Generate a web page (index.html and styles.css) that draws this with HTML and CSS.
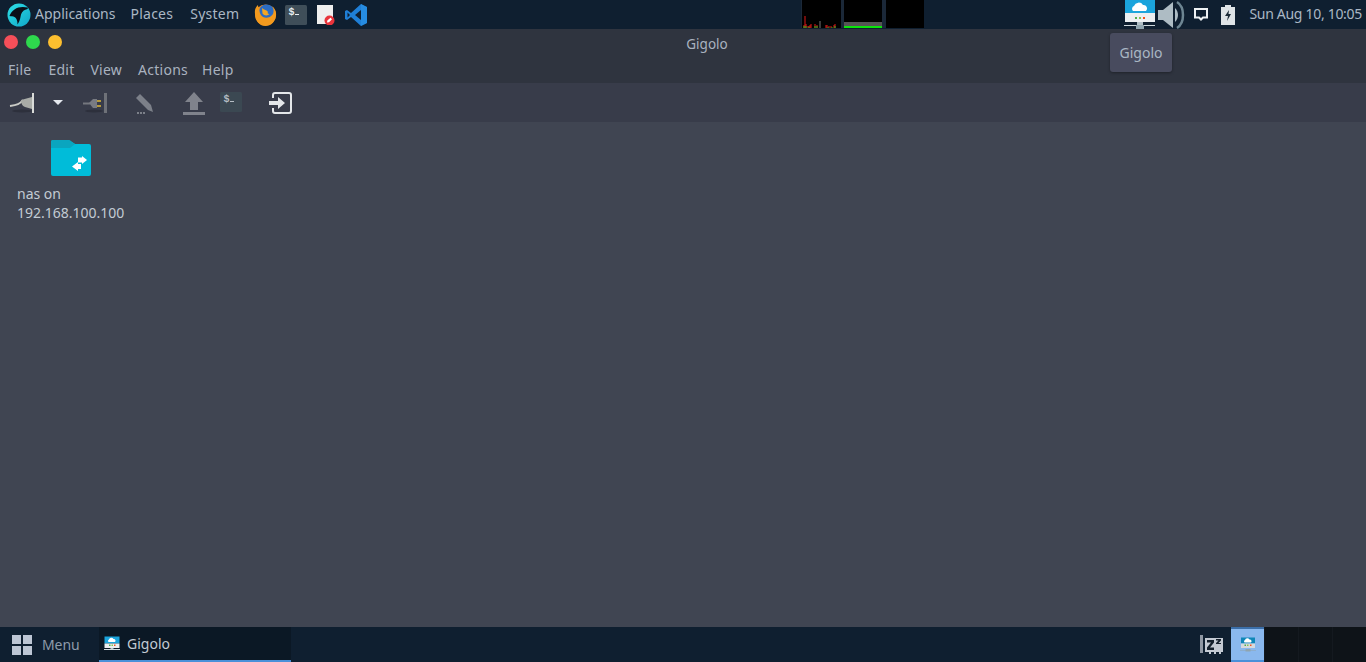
FILE: index.html
```html
<!DOCTYPE html>
<html lang="en">
<head>
<meta charset="utf-8">
<title>Gigolo</title>
<link rel="stylesheet" href="styles.css">
</head>
<body>
<header class="panel">
  <div class="panel-left">
    <svg class="logo" width="24" height="24" viewBox="0 0 24 24"><defs><linearGradient id="lg" x1="0" y1="0" x2="1" y2="1"><stop offset="0" stop-color="#2fe0e6"/><stop offset="1" stop-color="#0fa6c8"/></linearGradient></defs><circle cx="12" cy="12" r="11.500" fill="url(#lg)"/><path d="M2.500 13 C5 6 12 2.500 20.500 4.500 C21.500 5 20.500 6.500 19 6.500 C15.500 7.500 14 10 13.500 14 C13 17 12 19 10.500 21.500 C10.500 17.500 9.500 15 7.500 14 C6 13.300 4.500 13.500 2.500 13Z" fill="#0a0f18"/></svg>
    <span class="pmenu pm-app">Applications</span>
    <span class="pmenu pm-places">Places</span>
    <span class="pmenu pm-system">System</span>
    <svg class="launcher l-ff" width="24" height="24" viewBox="0 0 24 24"><circle cx="12.500" cy="12" r="10.500" fill="#f08a1d"/><circle cx="13.500" cy="9.500" r="8" fill="#2b6cc4"/><path d="M2 7 C2.500 5 3.500 3 5 2 C5 3.500 5.500 4.500 6.500 5 C6 8 7 12 10 14 C13 15.500 17 15 20 11 C21.500 7 20 4 18.500 3 C22 5 23.500 9 23 13 C22 19 18 23 12.500 23 C6 23 1 17 2 7Z" fill="#f29a1e"/><path d="M9 5 C11 7 14 7 15 9 C14 10 15 11 16.500 11 C15 13 11 13 9.500 10.500Z" fill="#f5a623"/></svg>
    <svg class="launcher l-term" width="22" height="20" viewBox="0 0 22 20"><rect width="22" height="20" rx="1.500" fill="#3f4e59"/><text x="3.500" y="10" class="term-glyph">$</text><rect x="10" y="9" width="4" height="1" fill="#e8eef2"/></svg>
    <svg class="launcher l-note" width="18" height="20" viewBox="0 0 18 20"><rect y="0" width="16" height="19" fill="#efefef"/><circle cx="12.500" cy="15.500" r="5" fill="#e8343c"/><path d="M10 17.500 L10.300 15.500 L13.500 12.800 L15 14.300 L12 17.200Z" fill="#fff"/></svg>
    <svg class="launcher l-code" width="24" height="24" viewBox="0 0 24 24"><path d="M17 1 L23 4 L23 20 L17 23 L7 14 L3 17 L1 16 L1 8 L3 7 L7 10Z M17 7 L11 12 L17 17Z M3.500 9.500 L3.500 14.500 L6 12Z" fill="#1f7fd6" fill-rule="evenodd"/><path d="M17 1 L23 4 V20 L17 23Z M17 7 V17" fill="#2b95e8" fill-rule="evenodd" opacity=".6"/></svg>
  </div>
  <div class="monitors">
    <div class="mon mon-cpu">
      <svg width="37" height="28" viewBox="0 0 37 28"><path d="M1 28V25M2 28V16M3 28V24M5 28V26M6 28V26M7 28V25M8 28V24M12 28V24M14 28V25M23 28V25M24 28V25M26 28V26M28 28V26M31 28V25M32 28V24" stroke="#e01818" stroke-width="1"/><path d="M1 28V26M3 28V26M6 28V27M12 28V26M14 28V26M25 28V27M29 28V27M32 28V26" stroke="#20c020" stroke-width="1"/><path d="M17 28V21" stroke="#777" stroke-width="1"/></svg>
    </div>
    <div class="mon mon-mem"><div class="mem-grey"></div><div class="mem-green"></div></div>
    <div class="mon mon-net"></div>
  </div>
  <div class="panel-right">
    <svg class="tray-net" width="32" height="30" viewBox="0 0 32 30"><rect x="1" y="0" width="30" height="13" fill="#1ba4dc"/><path d="M9 11 a3 3 0 0 1 1-5 a5 5 0 0 1 9-1 a3.500 3.500 0 0 1 3 6Z" fill="#fff"/><rect x="1" y="13" width="30" height="9" fill="#eceff1"/><rect x="11" y="17" width="2" height="2" fill="#4caf50"/><rect x="15" y="17" width="2" height="2" fill="#8bc34a"/><rect x="19" y="17" width="2" height="2" fill="#f4511e"/><rect x="13" y="22" width="6" height="3" fill="#b0bec5"/><rect x="0" y="25" width="31" height="1" fill="#cfd8dc"/><rect x="12" y="25" width="8" height="4" fill="#90a4ae"/></svg>
    <svg class="tray-vol" width="30" height="30" viewBox="0 0 30 30"><path d="M1 10 H6 L16 2 V28 L6 20 H1Z" fill="#aebcc4"/><path d="M18 8 C22 12 22 18 18 22Z" fill="#aebcc4"/><path d="M20 2 C28 7 28 23 20 28" fill="none" stroke="#6d8592" stroke-width="2.500"/></svg>
    <svg class="tray-msg" width="14" height="13" viewBox="0 0 14 13"><path d="M1 1 H13 V9.500 H9 L7 11.500 L5 9.500 H1Z" fill="none" stroke="#eef2f4" stroke-width="2"/></svg>
    <svg class="tray-bat" width="14" height="20" viewBox="0 0 14 20"><path d="M4 0 H10 V2 H14 V20 H0 V2 H4Z" fill="#dfe4e7"/><path d="M8 5 L4 11 H7 L6 16 L10 9 H7.500Z" fill="#1b2a36"/></svg>
    <span class="clock">Sun Aug 10, 10:05</span>
  </div>
</header>

<main class="window">
  <div class="titlebar">
    <div class="lights">
      <span class="light red"></span>
      <span class="light green"></span>
      <span class="light yellow"></span>
    </div>
    <span class="title">Gigolo</span>
  </div>
  <nav class="menubar">
    <span class="mi m-file">File</span>
    <span class="mi m-edit">Edit</span>
    <span class="mi m-view">View</span>
    <span class="mi m-actions">Actions</span>
    <span class="mi m-help">Help</span>
  </nav>
  <div class="toolbar">
    <svg class="t-plug" width="26" height="24" viewBox="0 0 26 24"><ellipse cx="13" cy="20" rx="10" ry="1.500" fill="#2d303c"/><path d="M1 15 C8 14 11 13 14 9" fill="none" stroke="#c9cbc6" stroke-width="2"/><path d="M12 9 L23 6 V18 L16 16 C13 15 12 12 12 9Z" fill="#a9aca8"/><rect x="23" y="2" width="2" height="20" fill="#d9dbd8"/></svg>
    <svg class="t-arrow" width="10" height="5" viewBox="0 0 10 5"><path d="M0 0 H10 L5 5Z" fill="#e6e9ef"/></svg>
    <svg class="t-unplug" width="26" height="24" viewBox="0 0 26 24"><ellipse cx="12" cy="20" rx="9" ry="1.500" fill="#2d303c"/><path d="M1 12.500 H8" stroke="#74777e" stroke-width="2"/><path d="M7 12 L11 8 H15 V17 H11Z" fill="#787b82"/><rect x="15" y="9" width="4" height="2" fill="#b59a3c"/><rect x="15" y="14" width="4" height="2" fill="#b59a3c"/><rect x="22" y="2" width="3" height="20" fill="#6e7178"/></svg>
    <svg class="t-edit" width="18" height="20" viewBox="0 0 18 20"><path d="M4 0 L0 4 L12 16 L17 18 L15 11Z" fill="#7c8089"/><path d="M1 18h2v2h-2zM4 18h2v2h-2zM7 18h2v2h-2z" fill="#7c8089"/></svg>
    <svg class="t-up" width="22" height="23" viewBox="0 0 22 23"><path d="M11 0 L20 10 H15 V18 H7 V10 H2Z" fill="#80838c"/><rect y="20" width="22" height="3" fill="#80838c"/></svg>
    <svg class="t-term" width="22" height="20" viewBox="0 0 22 20"><rect width="22" height="20" rx="1.500" fill="#3b4852"/><text x="3.500" y="10" class="term-glyph dim">$</text><rect x="10" y="9" width="4" height="1" fill="#b5bdc4"/></svg>
    <svg class="t-exit" width="24" height="22" viewBox="0 0 24 22"><path d="M4 6 V3 Q4 1 6 1 H20 Q22 1 22 3 V19 Q22 21 20 21 H6 Q4 21 4 19 V16" fill="none" stroke="#e4e7ea" stroke-width="2"/><path d="M0 9 H9 V5 L16 11 L9 17 V13 H0Z" fill="#e4e7ea"/></svg>
  </div>
  <section class="content">
    <div class="bookmark">
      <svg class="folder" width="40" height="36" viewBox="0 0 40 36"><path d="M2 0 H17 Q19 0 21 2 L24 4 H38 Q40 4 40 6 V34 Q40 36 38 36 H2 Q0 36 0 34 V2 Q0 0 2 0Z" fill="#00bcd9"/><path d="M2 0 H17 Q19 0 21 2 L24 4 L19 8 H0 V2 Q0 0 2 0Z" fill="#0aa5bf"/><path d="M36 20 L31 16 V17.500 H27 V22.500 H31 V24Z" fill="#fff"/><path d="M21 26.500 L27 22 V24 H30 V29 H27 V31Z" fill="#fff"/></svg>
      <div class="bm-label">nas on<br>192.168.100.100</div>
    </div>
  </section>
</main>

<footer class="taskbar">
  <div class="menu-btn">
    <span class="grid-icon"><i></i><i></i><i></i><i></i></span>
    <span class="menu-text">Menu</span>
  </div>
  <div class="task">
    <svg width="16" height="18" viewBox="0 0 32 30"><rect x="1" y="0" width="30" height="14" fill="#1ba4dc"/><path d="M9 11 a3 3 0 0 1 1-5 a5 5 0 0 1 9-1 a3.500 3.500 0 0 1 3 6Z" fill="#fff"/><rect x="1" y="14" width="30" height="9" fill="#eceff1"/><rect x="10" y="16" width="3" height="3" fill="#4caf50"/><rect x="15" y="16" width="3" height="3" fill="#8bc34a"/><rect x="20" y="16" width="3" height="3" fill="#f4511e"/><rect x="13" y="23" width="6" height="3" fill="#b0bec5"/><rect x="0" y="25" width="32" height="2" fill="#cfd8dc"/></svg>
    <span class="task-text">Gigolo</span>
  </div>
  <div class="tb-right">
    <svg class="sleep" width="24" height="20" viewBox="0 0 24 20"><rect x="0" y="0" width="3" height="18" fill="#8f97a3"/><path d="M5 3 H23 V17 L21 17 V19 H19 V17 H16 V19 H14 V17 H11 V19 H9 V17 H5Z" fill="#c4cad3"/><path d="M7 5 H14 V7.500 L10 12.500 H14 V15 H7 V12.500 L11 7.500 H7Z" fill="#15202c"/><path d="M16 4 H21 V5.500 L18.500 8 H21 V9 H16 V8 L18.500 5.500 H16Z" fill="#15202c"/></svg>
    <div class="tray-active">
      <svg width="16" height="16" viewBox="0 0 32 30"><rect x="2" y="0" width="28" height="12" fill="#0f87b8"/><path d="M9 10 a3 3 0 0 1 1-5 a5 5 0 0 1 9-1 a3.500 3.500 0 0 1 3 6Z" fill="#fff"/><rect x="2" y="12" width="28" height="9" fill="#d6dade"/><rect x="9" y="14" width="3" height="3" fill="#4caf50"/><rect x="14" y="14" width="3" height="3" fill="#8bc34a"/><rect x="20" y="14" width="3" height="3" fill="#f4511e"/><rect x="11" y="23" width="10" height="5" fill="#90a4ae"/><rect x="0" y="25" width="32" height="1" fill="#90a4ae"/></svg>
    </div>
    <div class="ws"></div>
    <div class="ws"></div>
    <div class="ws"></div>
  </div>
</footer>

<div class="tooltip">Gigolo</div>
</body>
</html>
```
FILE: styles.css
```css
* { box-sizing: border-box; }
html, body { margin: 0; padding: 0; width: 1366px; height: 662px; overflow: hidden; }
body {
  display: flex;
  flex-direction: column;
  font-family: "Noto Sans", sans-serif;
  font-size: 14px;
  color: #b6bfc9;
  background: #404552;
  position: relative;
}
svg { display: block; flex: none; }

.panel {
  height: 29px;
  flex: none;
  background: #0f1f30;
  display: flex;
  align-items: center;
  position: relative;
}
.panel-left { display: flex; align-items: center; width: 801px; flex: none; }
.logo { margin-left: 7px; }
.pmenu { color: #aab7c4; line-height: 26px; padding-bottom: 2px; }
.pm-app { margin-left: 4px; }
.pm-places { margin-left: 15px; letter-spacing: .25px; }
.pm-system { margin-left: 17px; letter-spacing: .25px; }
.l-ff { margin-left: 14px; }
.l-term { margin-left: 8px; }
.l-note { margin-left: 10px; }
.l-code { margin-left: 9px; }
.term-glyph { font-family: "Liberation Mono", monospace; font-size: 10px; fill: #e8eef2; font-weight: 700; }
.term-glyph.dim { fill: #b5bdc4; }

.monitors { display: flex; height: 28px; align-self: flex-start; flex: none; background: #1b2838; }
.mon { background: #000; height: 28px; }
.mon-cpu { width: 39px; margin-left: 1px; padding-left: 1px; }
.mon-mem { width: 38px; margin-left: 3px; display: flex; flex-direction: column; justify-content: flex-end; }
.mem-grey { height: 4px; background: #555; }
.mem-green { height: 2px; background: #0be40b; }
.mon-net { width: 38px; margin-left: 4px; }

.panel-right { display: flex; align-items: center; margin-left: auto; height: 29px; }
.tray-net { margin-right: 1px; }
.tray-msg { margin-left: 7px; }
.tray-bat { margin-left: 13px; }
.clock { margin-left: 14px; margin-right: 4px; color: #aab7c4; white-space: nowrap; letter-spacing: -.3px; padding-bottom: 2px; line-height: 26px; }

.window { flex: 1; display: flex; flex-direction: column; min-height: 0; }
.titlebar {
  height: 28px;
  flex: none;
  background: #2f343f;
  position: relative;
  display: flex;
  align-items: center;
  justify-content: center;
}
.lights { position: absolute; left: 4px; top: 6px; display: flex; gap: 8px; }
.light { width: 14px; height: 14px; border-radius: 50%; display: block; }
.red { background: #f64f59; }
.green { background: #2ed84d; }
.yellow { background: #fdbf2f; }
.title { color: #a9b2bf; font-size: 13.500px; margin-left: 48px; margin-top: 1px; }

.menubar {
  height: 26px;
  flex: none;
  background: #2f343f;
  display: flex;
  align-items: center;
  color: #a9b2bf;
  padding-left: 8px;
  letter-spacing: .25px;
}
.mi { line-height: 26px; }
.m-edit { margin-left: 17px; }
.m-view { margin-left: 16px; }
.m-actions { margin-left: 16px; }
.m-help { margin-left: 14px; }

.toolbar {
  height: 39px;
  flex: none;
  background: #383c4a;
  display: flex;
  align-items: center;
}
.t-plug { margin-left: 9px; }
.t-arrow { margin-left: 18px; }
.t-unplug { margin-left: 19px; }
.t-edit { margin-left: 28px; margin-top: 2px; }
.t-up { margin-left: 29px; margin-top: 1px; }
.t-term { margin-left: 15px; margin-top: -1px; }
.t-exit { margin-left: 27px; }

.content { flex: 1; background: #404552; padding: 18px 0 0 17px; min-height: 0; }
.bookmark { width: 110px; }
.folder { margin-left: 34px; }
.bm-label { margin-top: 8px; line-height: 19px; color: #c3cbd4; white-space: nowrap; }

.taskbar {
  height: 35px;
  flex: none;
  background: #0f1f30;
  display: flex;
  align-items: stretch;
}
.menu-btn { width: 99px; display: flex; align-items: center; padding-left: 12px; }
.grid-icon { display: grid; grid-template-columns: 9px 9px; grid-template-rows: 9px 9px; gap: 2px; width: 20px; height: 20px; }
.grid-icon i { background: #bdc6d4; display: block; }
.menu-text { margin-left: 10px; color: #8e9bab; letter-spacing: -.1px; }
.task {
  width: 192px;
  background: #0b1825;
  border-bottom: 2px solid #4a90d9;
  display: flex;
  align-items: center;
  padding-left: 5px;
}
.task-text { margin-left: 7px; color: #c3cbd4; }
.tb-right { margin-left: auto; display: flex; align-items: stretch; }
.sleep { align-self: center; margin-right: 7px; }
.tray-active {
  width: 33px;
  background: #8ab8ee;
  border-top: 2px solid #3b6ea8;
  border-bottom: 2px solid #4a90d9;
  display: flex;
  align-items: center;
  justify-content: center;
}
.ws { width: 34px; background: #0e1318; border-left: 1px solid #14191f; }

.tooltip {
  position: absolute;
  left: 1110px;
  top: 33px;
  width: 62px;
  height: 39px;
  background: #484b5e;
  border-radius: 3px;
  box-shadow: 0 1px 3px rgba(0,0,0,.35);
  color: #aab7c4;
  display: flex;
  align-items: center;
  justify-content: center;
}
```
